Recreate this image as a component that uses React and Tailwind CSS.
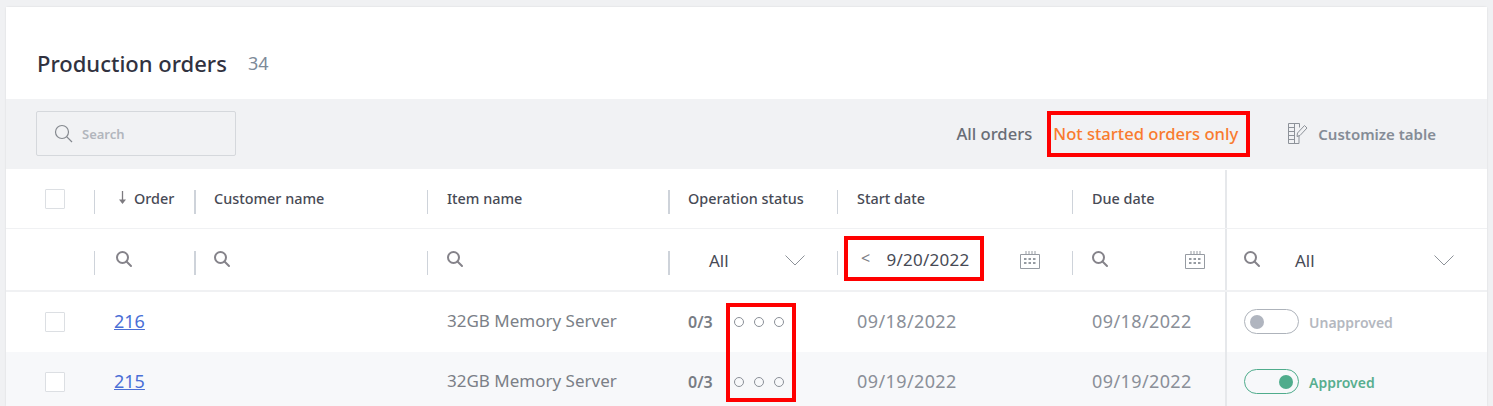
import React from "react";

const Sep = ({ thick }) => (
  <span className={`h-6 mt-[6px] shrink-0 bg-[#ced3da] ${thick ? "w-[2px] -ml-[1px]" : "w-px -ml-px"}`} />
);

const Mag = ({ className = "" }) => (
  <svg width="18" height="18" viewBox="0 0 18 18" fill="none" stroke="#85838a" strokeWidth="2" className={`shrink-0 ${className}`}>
    <circle cx="7.5" cy="7.5" r="5.5" />
    <path d="M11.5 11.5 16 16" strokeLinecap="round" />
  </svg>
);

const Calendar = () => (
  <svg width="21" height="18" viewBox="0 0 21 18" fill="none" stroke="#969ba2" className="shrink-0">
    <path d="M.5 3.500h19v14H.5z" />
    <path d="M6 0v3.500M9 0v3.500M12 0v3.500M15 0v3.500" />
    <path d="M4 8h2.500M8.500 8h2.500M13 8h2.500M4 12h2.500M8.500 12h2.500M13 12h2.500" strokeWidth="2" />
  </svg>
);

const Chevron = () => (
  <svg width="20" height="11" viewBox="0 0 20 11" fill="none" stroke="#8d9299" className="shrink-0 mt-px">
    <path d="M.5.500 10 10 19.500.500" />
  </svg>
);

const Box = () => <span className="block size-5 border border-[#dcdfe3] bg-white rounded-[1px]" />;

const Dots = () => (
  <span className="flex gap-[10px]">
    <i className="block size-[10px] rounded-full border border-[#8b9098]" />
    <i className="block size-[10px] rounded-full border border-[#8b9098]" />
    <i className="block size-[10px] rounded-full border border-[#8b9098]" />
  </span>
);

const COLS = "grid grid-cols-[89px_100px_233px_241px_169px_235px_152px_262px]";

const Head = ({ children, thick }) => (
  <div className="flex items-center">
    <Sep thick={thick} />
    <span className={`${thick ? "pl-[18px]" : "pl-[19px]"} text-[14.4px] font-medium text-[#474a55] whitespace-nowrap`}>{children}</span>
  </div>
);

const FilterCell = ({ children, thick, className = "" }) => (
  <div className={`flex items-center ${className}`}>
    <Sep thick={thick} />
    {children}
  </div>
);

const Row = ({ id, date, approved, alt }) => {
  const h = alt ? "h-[60px]" : "";
  return (
    <div className={`${COLS} ${alt ? "bg-[#f7f8fa] h-[54px]" : "bg-white h-[60px]"}`}>
      <div className={`flex pl-[39px] items-center ${h}`}><Box /></div>
      <div className={`flex items-center pl-[19px] ${h}`}>
        <a className="text-[18px] -mt-[2px] text-[#4a6fd6] underline">{id}</a>
      </div>
      <div />
      <div className={`flex items-center pl-[19px] pb-[2px] text-[17px] text-[#7b7f87] whitespace-nowrap ${h}`}>32GB Memory Server</div>
      <div className={`flex items-center pl-[19px] gap-[21px] ${h}`}>
        <span className="text-[16px] font-semibold text-[#787c84] -mt-px">0/3</span>
        <Dots />
      </div>
      <div className={`flex items-center pl-[19px] pb-[1px] text-[18px] tracking-[0.4px] text-[#8a8f98] ${h}`}>{date}</div>
      <div className={`flex items-center pl-[19px] pb-[1px] text-[18px] tracking-[0.4px] text-[#8a8f98] ${h}`}>{date}</div>
      <div className={`flex items-center pl-[17px] gap-[10px] border-l-2 border-[#e6e8eb] ${h}`}>
        <span className={`flex items-center h-[25px] w-[55px] -mt-px rounded-full border px-[5px] ${approved ? "justify-end border-[#4fac8c]" : "border-[#aeb3bb] bg-white"}`}>
          <i className={`block size-[14px] rounded-full ${approved ? "bg-[#4fac8c]" : "bg-[#b0b5bf]"}`} />
        </span>
        <span className={`text-[14px] font-semibold ${approved ? "text-[#57ae8f]" : "text-[#b4b8c0]"}`}>
          {approved ? "Approved" : "Unapproved"}
        </span>
      </div>
    </div>
  );
};

export default function App() {
  return (
    <div className="relative h-[406px] overflow-hidden bg-[#f0f1f3] pl-[6px] pr-[6px] pt-[7px] font-['Noto_Sans',sans-serif]">
      <div className="bg-white rounded-t-[2px] shadow-[0_0_2px_rgba(0,0,0,0.12)]">
        <div className="h-[92px] pl-[31px] pt-[41px] pb-[21px] flex items-center gap-[21px] bg-white">
          <h1 className="text-[22px] font-medium text-[#31323f] whitespace-nowrap">Production orders</h1>
          <span className="text-[18px] text-[#7d8a99]">34</span>
        </div>

        <div className="h-[70px] bg-[#f1f2f4] flex items-center pl-[30px] pr-[51px] pb-px">
          <div className="w-[200px] h-[45px] border border-[#d5d8dc] rounded-[2px] flex items-center pl-[17px] gap-[9px]">
            <svg width="19" height="19" viewBox="0 0 19 19" fill="none" stroke="#85898f" strokeWidth="1.2">
              <circle cx="8" cy="8" r="6.5" />
              <path d="M12.600 12.600 18 18" />
            </svg>
            <span className="text-[13px] font-semibold text-[#b2b6bd] mt-[2px]">Search</span>
          </div>
          <div className="ml-auto flex items-center">
            <span className="text-[16.6px] font-medium text-[#696d76] mt-px">All orders</span>
            <span className="ml-[15px] h-[46px] w-[203px] border-[4px] border-[#ff0000] flex items-center pl-[2px] pt-[1px] text-[16.6px] font-medium text-[#f97b2f] whitespace-nowrap">
              Not started orders only
            </span>
            <svg width="20" height="22" viewBox="0 0 20 22" fill="none" stroke="#8d9299" className="ml-[38px] mt-px">
              <path d="M.5.500h11v4M.5.500v20h10.500v-8" />
              <path d="M.5 4.500h6M.5 8.500h6M.5 12.500h6M.5 16.500h6M6.500 .5v20" />
              <path d="M9 13.500 9.500 10 16.500 2.500 19 5 12 12.500z" />
            </svg>
            <span className="ml-[10px] mt-[2px] text-[15px] font-semibold text-[#858c96] whitespace-nowrap">Customize table</span>
          </div>
        </div>

        <div className={`${COLS} h-[60px] border-b border-[#f0f1f3] pt-px`}>
          <div className="flex items-center pl-[39px]"><Box /></div>
          <div className="flex items-center">
            <Sep />
            <svg width="9" height="14" viewBox="0 0 9 14" fill="none" stroke="#7d7b80" strokeWidth="1.3" className="ml-[23px] -mt-[2px]">
              <path d="M4.500 0v12" />
              <path d="M1 8.500h7L4.500 13z" fill="#7d7b80" stroke="none" />
            </svg>
            <span className="ml-[7px] text-[14.4px] font-medium text-[#474a55]">Order</span>
          </div>
          <Head thick>Customer name</Head>
          <Head>Item name</Head>
          <Head thick>Operation status</Head>
          <Head>Start date</Head>
          <Head>Due date</Head>
          <div className="border-l-2 border-[#e6e8eb]" />
        </div>

        <div className={`${COLS} h-[63px] border-b-2 border-[#f0f1f3]`}>
          <div />
          <FilterCell><Mag className="ml-[20px] -mt-[2px]" /></FilterCell>
          <FilterCell thick><Mag className="ml-[17px] -mt-[2px]" /></FilterCell>
          <FilterCell><Mag className="ml-[18px] -mt-[2px]" /></FilterCell>
          <FilterCell thick>
            <span className="ml-[39px] mt-[2px] text-[17px] text-[#474a55]">All</span>
            <span className="ml-[56px]"><Chevron /></span>
          </FilterCell>
          <FilterCell>
            <span className="ml-[6px] -mt-[2px] h-[45px] w-[140px] border-[4px] border-[#ff0000] flex items-center pl-[13px] text-[17px] tracking-[0.25px] text-[#474a55] whitespace-nowrap">
              <span className="text-[16px] text-[#7d8087] -mt-[1px]">&lt;</span>
              <span className="ml-[16px] mt-[3px]">9/20/2022</span>
            </span>
            <span className="ml-[36px]"><Calendar /></span>
          </FilterCell>
          <FilterCell>
            <Mag className="ml-[18px] -mt-[2px]" />
            <span className="ml-[76px]"><Calendar /></span>
          </FilterCell>
          <div className="flex items-center pl-[16px] border-l-2 border-[#e6e8eb]">
            <Mag className="-mt-[2px]" />
            <span className="ml-[34px] mt-[2px] text-[17px] text-[#474a55]">All</span>
            <span className="ml-[119px]"><Chevron /></span>
          </div>
        </div>

        <Row id="216" date="09/18/2022" />
        <Row id="215" date="09/19/2022" approved alt />
      </div>

      <div className="absolute left-[726px] top-[303px] w-[70px] h-[99px] border-[4px] border-[#ff0000] pointer-events-none" />
    </div>
  );
}
